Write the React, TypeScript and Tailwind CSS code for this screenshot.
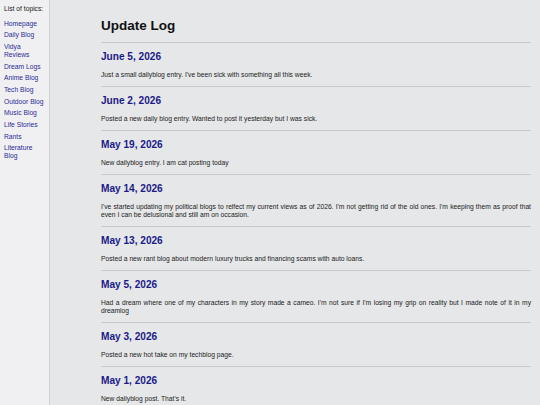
import React from "react";

const links = [
  "Homepage",
  "Daily Blog",
  "Vidya Reviews",
  "Dream Logs",
  "Anime Blog",
  "Tech Blog",
  "Outdoor Blog",
  "Music Blog",
  "Life Stories",
  "Rants",
  "Literature Blog",
];

const entries: { date: string; text: string }[] = [
  { date: "June 5, 2026", text: "Just a small dailyblog entry. I've been sick with something all this week." },
  { date: "June 2, 2026", text: "Posted a new daily blog entry. Wanted to post it yesterday but I was sick." },
  { date: "May 19, 2026", text: "New dailyblog entry. I am cat posting today" },
  {
    date: "May 14, 2026",
    text: "I've started updating my political blogs to relfect my current views as of 2026. I'm not getting rid of the old ones. I'm keeping them as proof that even I can be delusional and still am on occasion.",
  },
  { date: "May 13, 2026", text: "Posted a new rant blog about modern luxury trucks and financing scams with auto loans." },
  {
    date: "May 5, 2026",
    text: "Had a dream where one of my characters in my story made a cameo. I'm not sure if I'm losing my grip on reality but I made note of it in my dreamlog",
  },
  { date: "May 3, 2026", text: "Posted a new hot take on my techblog page." },
  { date: "May 1, 2026", text: "New dailyblog post. That's it." },
];

export default function App() {
  return (
    <div
      className="flex min-h-screen w-full bg-[#e6e7e9]"
      style={{ fontFamily: '"Liberation Sans", Arial, sans-serif' }}
    >
      <aside className="w-[50px] shrink-0 border-r border-[#cfd0d3] bg-[#f0f0f2] px-[4px] pt-[5px]">
        <div className="text-[6.72px] leading-[7.7px] text-[#222]">List of topics:</div>
        <ul className="mt-[7px] flex flex-col gap-[4px]">
          {links.map((l) => (
            <li key={l} className="text-[6.72px] leading-[7.7px] text-[#2b2b96]">
              {l}
            </li>
          ))}
        </ul>
      </aside>
      <main className="flex-1 pl-[51px] pr-[9px]">
        <h1 className="mt-[18px] mb-[8px] text-[13.5px] font-bold leading-[16px] text-[#111]">Update Log</h1>
        {entries.map((e) => (
          <section key={e.date} className="border-t border-[#c9cacd] pt-[8px] pb-[7px]">
            <h2 className="text-[10.1px] font-bold leading-[12px] text-[#1a1a88]">{e.date}</h2>
            <p className="mt-[8px] text-justify text-[6.72px] leading-[8px] text-[#222]">{e.text}</p>
          </section>
        ))}
      </main>
    </div>
  );
}
